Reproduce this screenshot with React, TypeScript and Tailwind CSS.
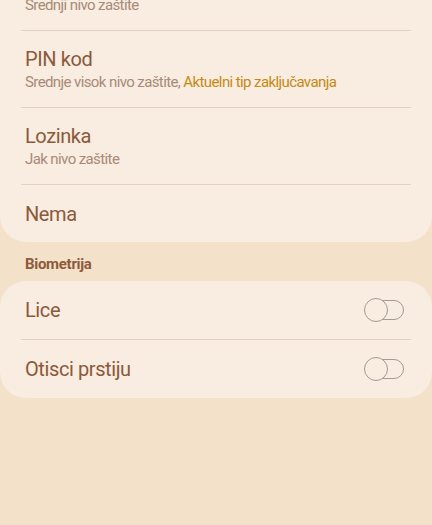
import React from "react";

const Toggle = () => (
  <div className="relative w-[40px] h-[24px] shrink-0">
    <div className="absolute right-0 top-[2px] w-[36px] h-[20px] rounded-full border-[1.5px] border-[#a09c94]" />
    <div className="absolute left-0 top-0 w-[24px] h-[24px] rounded-full border-[1.5px] border-[#a09c94] bg-[#f9ece0]" />
  </div>
);

const Divider = () => <div className="mx-[21px] h-px bg-[#e3d2c2]" />;

const titleCls = "text-[20px] leading-[26px] tracking-[-0.4px] text-[#8a5a3b]";
const subCls = "text-[15px] leading-[20px] tracking-[-0.6px] text-[#a68b78]";

export default function App() {
  return (
    <div
      className="w-[432px] h-[525px] overflow-hidden bg-[#f3e1ca]"
      style={{ fontFamily: "Roboto, 'Noto Sans', sans-serif" }}
    >
      <div className="mt-[-47px] bg-[#f9ece0] rounded-b-[26px]">
        <div className="h-[77px] flex flex-col justify-center px-[25px]">
          <div className={titleCls}>Uzorak</div>
          <div className={subCls}>Srednji nivo zaštite</div>
        </div>
        <Divider />
        <div className="h-[76px] flex flex-col justify-center px-[25px]">
          <div className={titleCls}>PIN kod</div>
          <div className={subCls}>
            Srednje visok nivo zaštite, <span className="text-[#c48a14]">Aktuelni tip zaključavanja</span>
          </div>
        </div>
        <Divider />
        <div className="h-[76px] flex flex-col justify-center px-[25px]">
          <div className={titleCls}>Lozinka</div>
          <div className={subCls}>Jak nivo zaštite</div>
        </div>
        <Divider />
        <div className="h-[57px] flex items-center px-[25px]">
          <div className={titleCls}>Nema</div>
        </div>
      </div>
      <div className="h-[39px] flex items-center px-[25px] pt-[6px]">
        <div className="text-[15px] font-bold tracking-[-0.3px] text-[#8e5a3a]">Biometrija</div>
      </div>
      <div className="bg-[#f9ece0] rounded-[26px]">
        <div className="h-[58px] flex items-center justify-between pl-[25px] pr-[28px]">
          <div className={titleCls}>Lice</div>
          <Toggle />
        </div>
        <Divider />
        <div className="h-[58px] flex items-center justify-between pl-[25px] pr-[28px]">
          <div className={titleCls}>Otisci prstiju</div>
          <Toggle />
        </div>
      </div>
    </div>
  );
}
